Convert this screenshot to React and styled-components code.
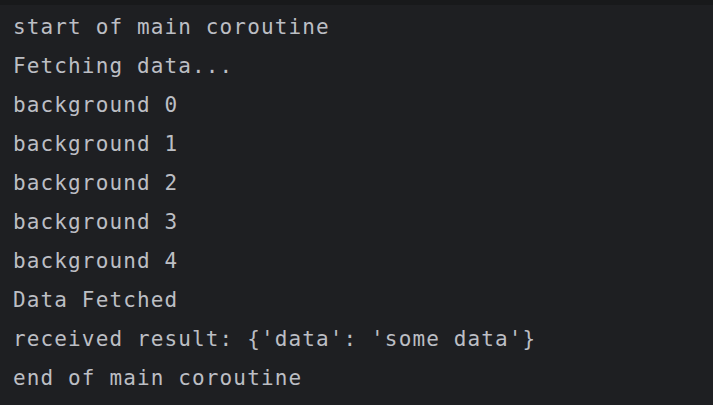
import React from "react";
import styled, { createGlobalStyle } from "styled-components";

const GlobalStyle = createGlobalStyle`
  html, body {
    margin: 0;
    padding: 0;
    background-color: #1e1f22;
  }
`;

const Window = styled.div`
  width: 713px;
  height: 405px;
  background-color: #1e1f22;
  display: flex;
  flex-direction: column;
  overflow: hidden;
`;

const TopStrip = styled.div`
  height: 5px;
  flex-shrink: 0;
  background-color: #18191b;
`;

const Output = styled.div`
  display: flex;
  flex-direction: column;
  padding: 3px 0 0 13px;
`;

const Line = styled.div`
  font-family: "DejaVu Sans Mono", "Liberation Mono", monospace;
  font-size: 21px;
  letter-spacing: 1.13px;
  line-height: 39px;
  height: 39px;
  color: #bcbec4;
  white-space: pre;
`;

const lines = [
  "start of main coroutine",
  "Fetching data...",
  "background 0",
  "background 1",
  "background 2",
  "background 3",
  "background 4",
  "Data Fetched",
  "received result: {'data': 'some data'}",
  "end of main coroutine",
];

function App() {
  return (
    <Window>
      <GlobalStyle />
      <TopStrip />
      <Output>
        {lines.map((text, i) => (
          <Line key={i}>{text}</Line>
        ))}
      </Output>
    </Window>
  );
}

export default App;
